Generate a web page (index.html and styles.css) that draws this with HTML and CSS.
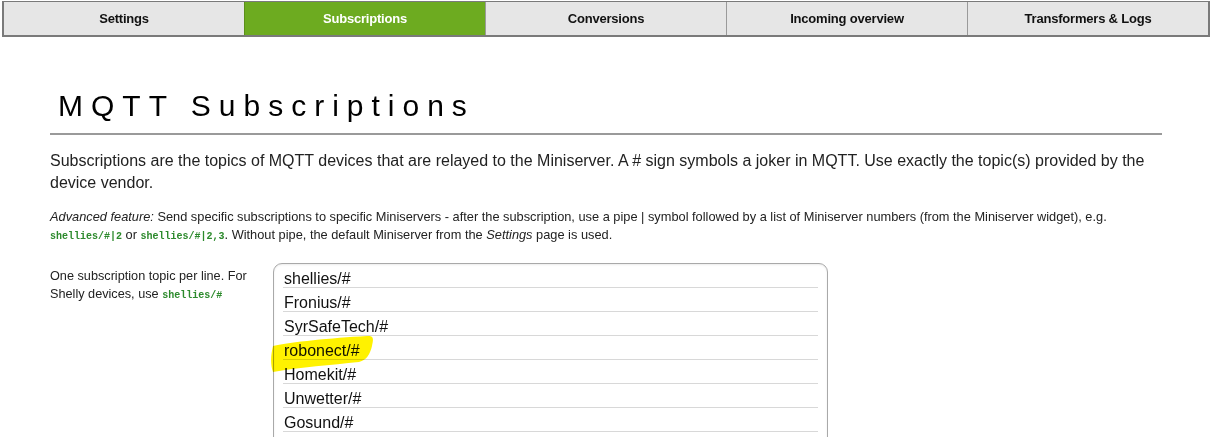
FILE: index.html
```html
<!DOCTYPE html>
<html lang="en">
<head>
<meta charset="utf-8">
<title>MQTT Subscriptions</title>
<link rel="stylesheet" href="styles.css">
</head>
<body>
<nav class="tabs">
  <a class="tab">Settings</a>
  <a class="tab active">Subscriptions</a>
  <a class="tab">Conversions</a>
  <a class="tab">Incoming overview</a>
  <a class="tab">Transformers &amp; Logs</a>
</nav>
<main class="content">
  <h1 class="title">MQTT Subscriptions</h1>
  <div class="rule"></div>
  <p class="intro">Subscriptions are the topics of MQTT devices that are relayed to the Miniserver. A # sign symbols a joker in MQTT. Use exactly the topic(s) provided by the device vendor.</p>
  <p class="hint"><em>Advanced feature:</em> Send specific subscriptions to specific Miniservers - after the subscription, use a pipe | symbol followed by a list of Miniserver numbers (from the Miniserver widget), e.g. <code>shellies/#|2</code> or <code>shellies/#|2,3</code>. Without pipe, the default Miniserver from the <em>Settings</em> page is used.</p>
  <div class="field">
    <label class="field-label">One subscription topic per line. For Shelly devices, use <code>shellies/#</code></label>
    <div class="topics">
      <div class="row">shellies/#</div>
      <div class="row">Fronius/#</div>
      <div class="row">SyrSafeTech/#</div>
      <div class="row">robonect/#</div>
      <div class="row">Homekit/#</div>
      <div class="row">Unwetter/#</div>
      <div class="row">Gosund/#</div>
      <div class="row">&nbsp;</div>
      <svg class="marker" width="110" height="40" viewBox="0 0 110 40">
        <path d="M2 12 C 20 8, 60 4, 96 2 C 104 1.5, 102 6, 101 12 C 99 20, 96 26, 88 28 C 60 31, 30 33, 2 38 C -1 30, 0 20, 2 12 Z" fill="#fff200"/>
      </svg>
    </div>
  </div>
</main>
</body>
</html>
```

FILE: styles.css
```css
html, body {
  margin: 0;
  padding: 0;
  background: #fff;
  overflow: hidden;
}

body {
  font-family: "Liberation Sans", Arial, sans-serif;
  color: #111;
}

.tabs {
  display: flex;
  margin: 1px 5px 0 2px;
  border: 1px solid #7a7a7a;
  border-width: 1px 2px 2px 2px;
  height: 33px;
}

.tab {
  flex: 1;
  display: flex;
  align-items: center;
  justify-content: center;
  background: #e6e6e6;
  color: #111;
  font-size: 13px;
  font-weight: bold;
  letter-spacing: -0.2px;
  border-left: 1px solid #9a9a9a;
}

.tab:first-child {
  border-left: none;
}

.tab.active {
  background: #6dab20;
  color: #fff;
  border-left-color: #5b8f1a;
}

.content {
  padding: 0 53px 0 50px;
}

.title {
  margin: 51px 0 0 0;
  padding-left: 8px;
  font-size: 30px;
  line-height: 36px;
  font-weight: normal;
  letter-spacing: 8px;
  color: #000;
}

.rule {
  margin-top: 9px;
  height: 2px;
  background: #9a9a9a;
}

.intro {
  margin: 15px 0 0 0;
  font-size: 16px;
  line-height: 22px;
  color: #222;
}

.hint {
  margin: 14px 0 0 0;
  font-size: 12.8px;
  line-height: 18px;
  color: #222;
}

code {
  font-family: "Liberation Mono", "DejaVu Sans Mono", monospace;
  font-size: 10px;
  line-height: 1;
  font-weight: bold;
  color: #2c8a2c;
}

.field {
  display: grid;
  grid-template-columns: 223px 555px;
  margin-top: 19px;
}

.field-label {
  padding-top: 4px;
  font-size: 12.7px;
  line-height: 18px;
  color: #222;
  width: 215px;
}

.topics {
  position: relative;
  border: 1px solid #a9a9a9;
  border-radius: 9px 9px 0 0;
  padding: 0 9px;
  box-shadow: inset 0 1px 2px rgba(0, 0, 0, 0.08);
}

.row {
  height: 24px;
  box-sizing: border-box;
  padding-top: 7px;
  line-height: 16px;
  font-size: 16px;
  color: #111;
  border-bottom: 1px solid #d8d8d8;
  padding-left: 1px;
}

.marker {
  position: absolute;
  left: -3px;
  top: 70px;
  mix-blend-mode: multiply;
}
```
